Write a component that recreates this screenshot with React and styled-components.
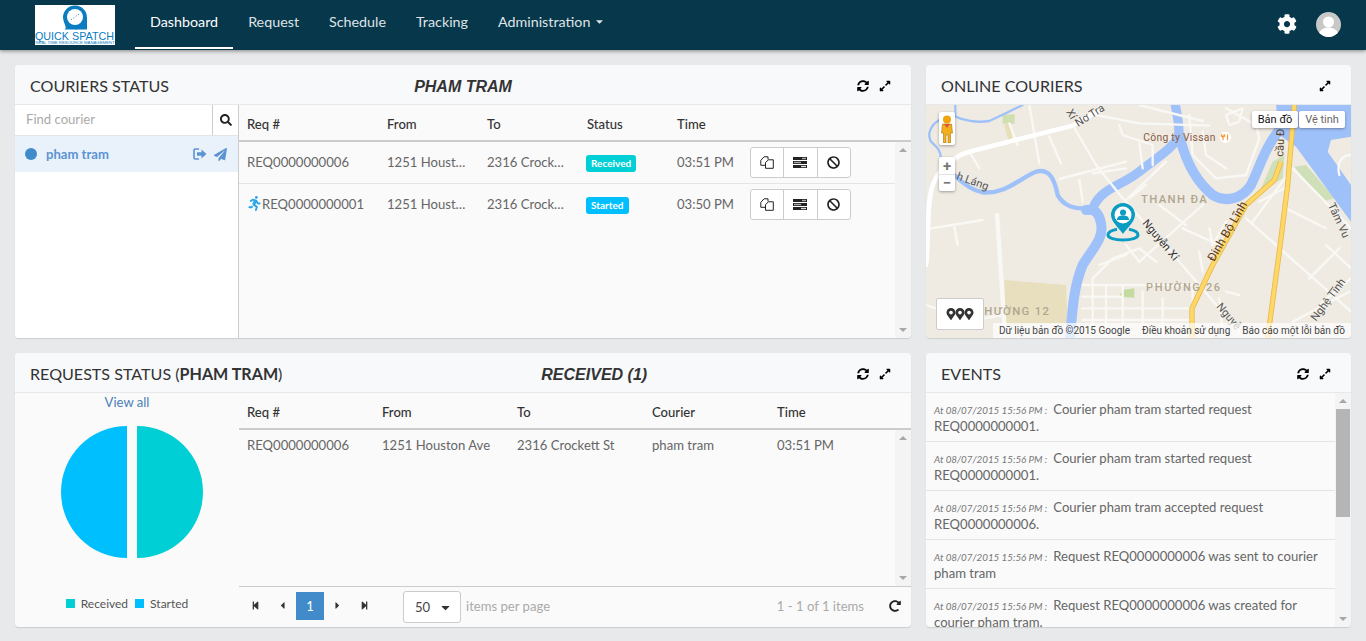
import React from 'react'
import styled, {createGlobalStyle} from 'styled-components'
import {
    FaCog, FaSearch, FaSyncAlt, FaExpandAlt, FaPaperPlane, FaBan, FaRunning,
    FaStepBackward, FaStepForward, FaCaretLeft, FaCaretRight, FaCaretDown, FaRedoAlt, FaMapMarkerAlt
} from 'react-icons/fa'

const GlobalStyle = createGlobalStyle`
    html, body {
        margin: 0;
        padding: 0;
        height: 100%;
        overflow: hidden;
        background: #e8e9eb;
        font-family: "Lato", sans-serif;
        font-size: 13.1px;
        color: #666;
    }
    * { box-sizing: border-box; }
`

const CYAN = '#00cfd5'
const SKY = '#00bfff'

//Navbar
const Navbar = styled.header`
    height: 50px;
    background: #07374b;
    box-shadow: 0 1px 4px rgba(0,0,0,.45);
    display: flex;
    align-items: stretch;
    padding: 0 25px 0 35px;
    position: relative;
    z-index: 2;
`
const LogoBox = styled.div`
    width: 80px;
    height: 40px;
    margin-top: 5px;
    background: #fff;
    overflow: hidden;
    svg { display: block; }
`
const NavList = styled.nav`
    display: flex;
    margin-left: 20px;
    flex: 1;
`
const NavItem = styled.a`
    display: flex;
    align-items: center;
    gap: 4px;
    height: 49px;
    padding: 0 15px 5px;
    font-size: 14.3px;
    color: ${p => (p.$active ? '#fff' : '#dfe3e6')};
    border-bottom: 2px solid ${p => (p.$active ? '#fff' : 'transparent')};
    svg { font-size: 11px; }
`
const NavRight = styled.div`
    display: flex;
    align-items: center;
    gap: 19px;
    color: #fff;
    font-size: 20px;
    padding-bottom: 2px;
`
const Avatar = styled.div`
    width: 25px;
    height: 25px;
    border-radius: 50%;
    overflow: hidden;
    background: #c8c8c8;
    svg { display: block; }
`

//Page
const Page = styled.main`
    display: grid;
    grid-template-columns: 896px 425px;
    grid-template-rows: 273px 274px;
    gap: 15px;
    padding: 15px;
`
const Panel = styled.section`
    background: #fafafa;
    border-radius: 4px;
    box-shadow: 0 1px 1px rgba(0,0,0,.12);
    display: flex;
    flex-direction: column;
    overflow: hidden;
    min-width: 0;
`
const PanelHead = styled.div`
    height: 40px;
    flex: none;
    display: flex;
    align-items: center;
    padding: 2px 20px 0 15px;
    background: #f8f9fb;
    border-bottom: 1px solid #e6e8ea;
`
const PanelTitle = styled.h2`
    margin: 0;
    font-size: 16.1px;
    font-weight: 400;
    color: #333;
    white-space: nowrap;
    b { font-weight: 700; }
`
const PanelCenter = styled.div`
    flex: 1;
    text-align: center;
    font-family: "Liberation Sans", sans-serif;
    font-size: 16px;
    font-weight: 700;
    font-style: italic;
    color: #333;
    padding-top: 3px;
    padding-left: ${p => p.$left || 0}px;
    padding-right: ${p => p.$right || 0}px;
`
const HeadTools = styled.div`
    display: flex;
    gap: 10px;
    margin-left: auto;
    color: #000;
    font-size: 12px;
    svg { display: block; }
`
const PanelBody = styled.div`
    flex: 1;
    min-height: 0;
    display: flex;
`

//Courier sidebar
const Sidebar = styled.aside`
    width: 224px;
    flex: none;
    background: #fff;
    border-right: 1px solid #ccc;
`
const SearchRow = styled.div`
    height: 31px;
    display: flex;
    align-items: center;
    border-bottom: 1px solid #e4e4e4;
`
const SearchInput = styled.div`
    flex: 1;
    padding: 0 0 3px 11px;
    color: #aaa;
`
const SearchButton = styled.div`
    width: 26px;
    height: 30px;
    border-left: 1px solid #ccc;
    display: flex;
    align-items: center;
    justify-content: center;
    color: #222;
    font-size: 12px;
`
const CourierRow = styled.div`
    height: 36px;
    display: flex;
    align-items: center;
    padding: 0 11px 0 10px;
    background: #e9f1fa;
    color: #5b93d3;
    font-weight: 700;
`
const CourierDot = styled.span`
    width: 12px;
    height: 12px;
    border-radius: 50%;
    background: #428bca;
    margin-right: 9px;
`
const CourierName = styled.span`
    flex: 1;
`
const CourierTools = styled.span`
    display: flex;
    align-items: center;
    gap: 7px;
    font-size: 13px;
    svg { display: block; }
`

//Tables
const TableWrap = styled.div`
    flex: 1;
    min-width: 0;
    display: flex;
    flex-direction: column;
`
const HeadRow = styled.div`
    height: 37px;
    flex: none;
    display: grid;
    grid-template-columns: ${p => p.$cols};
    align-items: center;
    border-bottom: 2px solid #ccc;
    padding-top: 2px;
    font-weight: 500;
    color: #333;
`
const HeadCell = styled.div`
    padding-left: 8px;
`
const TableScroll = styled.div`
    flex: 1;
    min-height: 0;
    display: flex;
`
const Rows = styled.div`
    flex: 1;
    min-width: 0;
`
const Row = styled.div`
    display: grid;
    grid-template-columns: ${p => p.$cols};
    align-items: center;
    height: ${p => p.$height}px;
    border-bottom: ${p => (p.$line ? '1px solid #e4e4e4' : 'none')};
`
const Cell = styled.div`
    padding: 0 12px 2px 8px;
    white-space: nowrap;
    overflow: hidden;
    display: flex;
    align-items: center;
`
const Clip = styled.span`
    overflow: hidden;
    text-overflow: ellipsis;
`
const Runner = styled(FaRunning)`
    color: #2aa6e6;
    font-size: 15px;
    flex: none;
`
const Badge = styled.span`
    display: inline-block;
    height: 17px;
    line-height: 17px;
    padding: 0 5px;
    margin: 4px 0 0 -1px;
    border-radius: 3px;
    font-size: 10px;
    font-weight: 700;
    color: #fff;
    background: ${p => p.$color};
`
const BtnGroup = styled.div`
    display: flex;
    width: 101px;
    height: 31px;
    margin-top: 2px;
    background: #fff;
    border: 1px solid #ccc;
    border-radius: 3px;
`
const GroupBtn = styled.div`
    flex: 1;
    display: flex;
    align-items: center;
    justify-content: center;
    color: #222;
    font-size: 13px;
    & + & { border-left: 1px solid #ccc; }
`

//Scrollbar
const ScrollBar = styled.div`
    width: 16px;
    flex: none;
    display: flex;
    flex-direction: column;
    align-items: center;
    background: #f4f4f4;
`
const ScrollArrow = styled.div`
    width: 0;
    height: 0;
    flex: none;
    margin: 6px 0;
    border-left: 4px solid transparent;
    border-right: 4px solid transparent;
    ${p => (p.$down ? 'border-top: 4px solid #a6a6a6;' : 'border-bottom: 4px solid #a6a6a6;')}
`
const ScrollThumb = styled.div`
    width: 14px;
    height: 108px;
    background: #b5b5b5;
`
const ScrollSpace = styled.div`
    flex: 1;
`

//Requests
const ChartCol = styled.div`
    width: 224px;
    flex: none;
    display: flex;
    flex-direction: column;
    align-items: center;
`
const ViewAll = styled.a`
    color: #4a80b8;
    height: 33px;
    line-height: 18px;
`
const PieSvg = styled.svg`
    display: block;
    margin-left: 10px;
`
const Legend = styled.div`
    margin-top: 38px;
    margin-right: 7px;
    display: flex;
    align-items: center;
    font-size: 12px;
    color: #555;
`
const LegendMark = styled.span`
    width: 9px;
    height: 9px;
    background: ${p => p.$color};
    margin: 0 6px 0 7px;
`
const Pager = styled.div`
    height: 41px;
    flex: none;
    display: flex;
    align-items: center;
    border-top: 1px solid #ccc;
    padding: 0 10px 3px 3px;
    color: #aaa;
`
const PagerArrow = styled.span`
    width: 27px;
    display: flex;
    justify-content: center;
    color: #333;
    font-size: ${p => p.$size || 9}px;
`
const PagerCurrent = styled.span`
    width: 28px;
    height: 28px;
    background: #428bca;
    color: #fff;
    display: flex;
    align-items: center;
    justify-content: center;
`
const PageSize = styled.div`
    width: 58px;
    height: 32px;
    margin: 3px 5px 0 25px;
    background: #fff;
    border: 1px solid #ccc;
    border-radius: 3px;
    display: flex;
    align-items: center;
    justify-content: space-between;
    padding: 0 8px 0 11px;
    color: #444;
    svg { font-size: 13px; color: #333; }
`
const PagerInfo = styled.span`
    margin-left: auto;
    margin-right: 25px;
`
const PagerReload = styled.span`
    color: #222;
    font-size: 12px;
    display: flex;
`

//Events
const EventList = styled.div`
    flex: 1;
    min-width: 0;
    overflow: hidden;
`
const EventItem = styled.div`
    height: 49px;
    padding: 8px 8px 0;
    line-height: 16px;
    border-bottom: 1px solid #e4e4e4;
    color: #666;
    overflow: hidden;
`
const EventTime = styled.i`
    font-size: 9.8px;
    color: #777;
    margin-right: 6px;
`

//Map
const MapBox = styled.div`
    position: relative;
    flex: 1;
    overflow: hidden;
    background: #efebe3;
    font-family: "Roboto", sans-serif;
`
const MapArt = styled.svg`
    display: block;
    width: 425px;
    height: 233px;
    text { font-family: "Roboto", sans-serif; }
`
const MapCtl = styled.div`
    position: absolute;
    left: ${p => p.$left}px;
    top: ${p => p.$top}px;
    width: ${p => p.$width}px;
    height: ${p => p.$height}px;
    background: #fff;
    border-radius: 2px;
    box-shadow: 0 1px 3px rgba(0,0,0,.35);
    display: flex;
    align-items: center;
    justify-content: center;
    color: #666;
    font-size: 11px;
    svg { display: block; }
`
const ZoomBtn = styled.div`
    height: 17px;
    display: flex;
    align-items: center;
    justify-content: center;
    font-size: 15px;
    font-weight: 700;
    color: #777;
    & + & { border-top: 1px solid #e2e2e2; }
`
const ZoomStack = styled(MapCtl)`
    display: block;
`
const MapType = styled(MapCtl)`
    color: ${p => (p.$on ? '#111' : '#666')};
`
const PinsButton = styled.div`
    position: absolute;
    left: 10px;
    top: 193px;
    width: 48px;
    height: 32px;
    background: #fff;
    border: 1px solid #ccc;
    border-radius: 2px;
    display: flex;
    align-items: center;
    justify-content: center;
    color: #333;
    font-size: 12px;
    svg { margin: 0 -1.5px; }
`
const Attribution = styled.div`
    position: absolute;
    right: 0;
    bottom: 0;
    height: 15px;
    padding: 0 6px;
    display: flex;
    gap: 12px;
    align-items: center;
    font-size: 10px;
    color: #444;
    background: rgba(255,255,255,.7);
    white-space: nowrap;
`
const CourierPin = styled.svg`
    position: absolute;
    left: 180px;
    top: 97px;
`

const COURIER_COLS = '140px 100px 100px 90px 73px 1fr'
const REQUEST_COLS = '135px 135px 135px 125px 1fr'

const mainRoad = 'M0 480C10 400 0 300 20 240C40 190 90 150 130 140L440 62L520 15'
const roads = [
    'M440 60L510 180L590 280L760 470L940 680',
    'M510 30L640 55L850 62', 'M640 0L830 48', 'M310 0L340 175', 'M370 95L405 175', 'M250 55L275 120',
    'M15 370L170 345', 'M85 365L95 420', 'M130 140L160 190', 'M400 222L600 170', 'M460 225L470 290',
    'M500 205L600 190', 'M580 60L590 90L680 120L680 180', 'M640 115L650 190',
    'M600 285L720 170', 'M610 280L660 240', 'M640 470L830 300', 'M770 370L880 420', 'M850 370L860 420L900 350',
    'M700 300L780 360', 'M500 700V520L560 460L640 430L690 470', 'M520 480L600 450', 'M600 420L640 470',
    'M470 540H800V690', 'M470 575H590', 'M470 610H790', 'M470 645H790', 'M540 540V690', 'M590 540V690', 'M650 560V690', 'M710 580V690',
    'M980 350L1100 190L1275 370', 'M1000 290L1075 250', 'M1080 310L1200 370', 'M960 340L1275 620',
    'M1150 520L1240 430', 'M1180 600L1275 520', 'M1100 650L1270 560', 'M1200 420L1275 490',
    'M790 30L800 150L870 220L960 210L1000 100L990 60L900 10', 'M900 30L950 10L940 50L910 60Z', 'M830 80L840 150L900 190',
    'M1240 210C1230 170 1250 150 1275 150', 'M820 440L830 500', 'M900 560L940 570', 'M880 580L890 690',
    'M0 600L60 620', 'M170 640L235 630',
]

function LogOutIcon() {
    return (
        <svg width="14" height="12" viewBox="0 0 14 12">
            <path d="M6 1H2.2C1.5 1 1 1.5 1 2.2v7.6C1 10.5 1.5 11 2.2 11H6" fill="none" stroke="currentColor" strokeWidth="1.6" />
            <path d="M4 4.2h4.5V1.5L13.5 6l-5 4.5V7.8H4z" fill="currentColor" />
        </svg>
    )
}

function CopyIcon() {
    return (
        <svg width="14" height="13" viewBox="0 0 14 13" fill="none" stroke="#222" strokeWidth="1">
            <path d="M5 9.3H.8V4.3L4.1.8H8v2.700" />
            <path d="M5.500 12.300V6.500L8.500 3.800h4.800v8.500z" />
        </svg>
    )
}

function BarsIcon() {
    return (
        <svg width="14" height="11" viewBox="0 0 14 11">
            <rect width="14" height="3" fill="#222" />
            <rect x="9" y=".8" width="4" height="1.4" fill="#aaa" />
            <rect y="4" width="14" height="3" fill="#222" />
            <rect x="1" y="4.8" width="7" height="1.4" fill="#aaa" />
            <rect y="8" width="14" height="3" fill="#222" />
            <rect x="8" y="8.8" width="5" height="1.4" fill="#ddd" />
        </svg>
    )
}

function LogoMark() {
    return (
        <svg width="80" height="40" viewBox="0 0 80 40">
            <path d="M28 12a12 12 0 1 1 12 12.5H29.500C33 23 28 18 28 12z" fill="#0a7cc0" />
            <path d="M40 24.5h12V12z" fill="#0a7cc0" />
            <circle cx="40" cy="12" r="8" fill="#fff" />
            <path d="M36 15l8-6" stroke="#0a7cc0" strokeWidth="1" strokeDasharray="1 2" />
            <text x="0" y="34.500" fontFamily="Liberation Sans" fontSize="11" fill="#0a7cc0" textLength="79" lengthAdjust="spacingAndGlyphs">QUICK SPATCH</text>
            <text x="0.500" y="39" fontFamily="Liberation Sans" fontSize="3.200" fill="#0a7cc0" textLength="79" lengthAdjust="spacingAndGlyphs">REAL TIME RESOURCE MANAGEMENT</text>
        </svg>
    )
}

function MapDrawing() {
    const label = {fill: '#555', fontSize: 33}
    const area = {fill: '#b0a68f', fontSize: 34, fontWeight: 500}
    return (
        <MapArt viewBox="0 0 1275 699">
            <rect width="1275" height="699" fill="#efebe3" />
            <path d="M235 525L420 540L425 655L240 660Z" fill="#e8dfbf" />
            <rect x="230" y="28" width="36" height="28" fill="#cfdfae" />
            <path d="M235 60L250 55L262 115L250 118Z" fill="#e6dfb8" />
            <path d="M578 575L590 555L625 550V578Z" fill="#c4dba0" />
            <path d="M1040 170L1075 150L1070 220L1000 262Z" fill="#cfe0b8" />
            <path d="M1105 185L1140 180L1225 280L1190 290Z" fill="#cfe0b8" />
            {/* water */}
            <g fill="none" stroke="#9fc1fa" strokeLinecap="round" strokeLinejoin="round">
                <path d="M432 700C440 600 445 540 470 480C500 430 535 400 525 355C518 320 505 312 480 315" strokeWidth="30" />
                <path d="M500 305C450 320 410 300 395 270C385 220 370 190 330 200C280 220 240 268 170 262C130 255 100 225 85 210" strokeWidth="13" />
                <path d="M505 300C530 250 590 240 640 200C690 160 740 130 758 95C762 60 752 25 748 0" strokeWidth="28" />
                <path d="M762 100C780 170 810 230 860 270C900 295 950 280 975 240C1000 190 1015 130 1060 75" strokeWidth="30" />
                <path d="M290 0C260 15 240 25 190 48C150 55 110 45 88 35V0" strokeWidth="7" />
                <path d="M40 45C15 60 2 85 15 110C30 125 42 130 45 160" strokeWidth="7" />
            </g>
            <path d="M1050 0H1275V95L1215 105L1205 140L1275 240V350L1110 125L1060 90Z" fill="#9fc1fa" />
            <g fill="none" stroke="#f9f8f4" strokeLinecap="round" strokeLinejoin="round" strokeWidth="7">
                {roads.map((d) => <path key={d} d={d} />)}
            </g>
            <path d="M213 325L235 660" stroke="#f9f8f4" strokeWidth="13" />
            <path d={mainRoad} fill="none" stroke="#fff" strokeLinecap="round" strokeWidth="14" />
            <g fill="none" strokeLinejoin="round">
                <path d="M798 699V610L860 480L960 300L1045 225L1065 170" stroke="#e9b84e" strokeWidth="16" />
                <path d="M1025 699L1060 440L1085 240L1105 0" stroke="#e9b84e" strokeWidth="16" />
                <path d="M798 699V610L860 480L960 300L1045 225L1065 170" stroke="#fdd867" strokeWidth="11" />
                <path d="M1025 699L1060 440L1085 240L1105 0" stroke="#fdd867" strokeWidth="11" />
            </g>
            <text {...label} transform="translate(420 20) rotate(60)">Xí</text>
            <text {...label} transform="translate(456 66) rotate(-32)">Nơ Tra</text>
            <text x="652" y="107" fill="#8a5a44" fontSize="31" letterSpacing=".8">Công ty Vissan</text>
            <circle cx="898" cy="97" r="17" fill="#fff" />
            <path d="M891 88v18M905 88v18M886 88v7h10v-7" fill="none" stroke="#f08c1a" strokeWidth="3" />
            <text {...label} fill="#5c4326" transform="translate(1072 155) rotate(-88)">cầu Đ</text>
            <text {...label} transform="translate(90 222) rotate(20)">h Láng</text>
            <text {...area} letterSpacing="4" x="645" y="294">THANH ĐA</text>
            <text {...area} letterSpacing="5" fontSize="33" x="660" y="559">PHƯỜNG 26</text>
            <text {...area} letterSpacing="4" x="175" y="630">HƯỜNG 12</text>
            <text {...label} fill="#333" transform="translate(648 355) rotate(50)">Nguyễn Xí</text>
            <text {...label} fill="#5c3a18" fontSize="36" transform="translate(864 472) rotate(-60)">Đinh Bộ Lĩnh</text>
            <text {...label} transform="translate(1205 300) rotate(65)">Tâm Vu</text>
            <text {...label} transform="translate(1170 650) rotate(-53)">Nghệ Tĩnh</text>
            <text {...label} transform="translate(870 605) rotate(50)">Nguyễ</text>
        </MapArt>
    )
}

function Tools({sync}) {
    return (
        <HeadTools>
            {sync && <FaSyncAlt />}
            <FaExpandAlt />
        </HeadTools>
    )
}

function RowButtons() {
    return (
        <BtnGroup>
            <GroupBtn><CopyIcon /></GroupBtn>
            <GroupBtn><BarsIcon /></GroupBtn>
            <GroupBtn><FaBan /></GroupBtn>
        </BtnGroup>
    )
}

const EVENTS = [
    'Courier pham tram started request REQ0000000001.',
    'Courier pham tram started request REQ0000000001.',
    'Courier pham tram accepted request REQ0000000006.',
    'Request REQ0000000006 was sent to courier pham tram',
    'Request REQ0000000006 was created for courier pham tram.',
]

function App() {
    return (
        <>
            <GlobalStyle />
            <Navbar>
                <LogoBox><LogoMark /></LogoBox>
                <NavList>
                    <NavItem $active>Dashboard</NavItem>
                    <NavItem>Request</NavItem>
                    <NavItem>Schedule</NavItem>
                    <NavItem>Tracking</NavItem>
                    <NavItem>Administration <FaCaretDown /></NavItem>
                </NavList>
                <NavRight>
                    <FaCog />
                    <Avatar>
                        <svg width="25" height="25" viewBox="0 0 25 25">
                            <circle cx="12.5" cy="10" r="5.5" fill="#fff" />
                            <ellipse cx="12.5" cy="22" rx="9.5" ry="6.5" fill="#fff" />
                        </svg>
                    </Avatar>
                </NavRight>
            </Navbar>
            <Page>
                <Panel>
                    <PanelHead>
                        <PanelTitle>COURIERS STATUS</PanelTitle>
                        <PanelCenter $right={100}>PHAM TRAM</PanelCenter>
                        <Tools sync />
                    </PanelHead>
                    <PanelBody>
                        <Sidebar>
                            <SearchRow>
                                <SearchInput>Find courier</SearchInput>
                                <SearchButton><FaSearch /></SearchButton>
                            </SearchRow>
                            <CourierRow>
                                <CourierDot />
                                <CourierName>pham tram</CourierName>
                                <CourierTools><LogOutIcon /><FaPaperPlane /></CourierTools>
                            </CourierRow>
                        </Sidebar>
                        <TableWrap>
                            <HeadRow $cols={COURIER_COLS}>
                                <HeadCell>Req #</HeadCell>
                                <HeadCell>From</HeadCell>
                                <HeadCell>To</HeadCell>
                                <HeadCell>Status</HeadCell>
                                <HeadCell>Time</HeadCell>
                            </HeadRow>
                            <TableScroll>
                                <Rows>
                                    <Row $cols={COURIER_COLS} $height={42} $line>
                                        <Cell>REQ0000000006</Cell>
                                        <Cell><Clip>1251 Houston Ave</Clip></Cell>
                                        <Cell><Clip>2316 Crockett St</Clip></Cell>
                                        <Cell><Badge $color={CYAN}>Received</Badge></Cell>
                                        <Cell>03:51 PM</Cell>
                                        <Cell><RowButtons /></Cell>
                                    </Row>
                                    <Row $cols={COURIER_COLS} $height={41}>
                                        <Cell><Runner />REQ0000000001</Cell>
                                        <Cell><Clip>1251 Houston Ave</Clip></Cell>
                                        <Cell><Clip>2316 Crockett St</Clip></Cell>
                                        <Cell><Badge $color={SKY}>Started</Badge></Cell>
                                        <Cell>03:50 PM</Cell>
                                        <Cell><RowButtons /></Cell>
                                    </Row>
                                </Rows>
                                <ScrollBar>
                                    <ScrollArrow />
                                    <ScrollSpace />
                                    <ScrollArrow $down />
                                </ScrollBar>
                            </TableScroll>
                        </TableWrap>
                    </PanelBody>
                </Panel>

                <Panel>
                    <PanelHead>
                        <PanelTitle>ONLINE COURIERS</PanelTitle>
                        <Tools />
                    </PanelHead>
                    <MapBox>
                        <MapDrawing />
                        <MapCtl $left={13} $top={7} $width={16} $height={33}>
                            <svg width="12" height="28" viewBox="0 0 12 28">
                                <circle cx="6" cy="4.5" r="4" fill="#f0a30a" />
                                <path d="M1.5 9h9l1 9h-2v10H7v-8H5v8H2.5V18h-2z" fill="#f2b01e" stroke="#a8750c" strokeWidth=".6" />
                                <path d="M3 9h6l-3 4z" fill="#e0533a" />
                            </svg>
                        </MapCtl>
                        <ZoomStack $left={13} $top={52} $width={16} $height={34}>
                            <ZoomBtn>+</ZoomBtn>
                            <ZoomBtn>−</ZoomBtn>
                        </ZoomStack>
                        <MapType $on $left={326} $top={6} $width={46} $height={17}>Bản đồ</MapType>
                        <MapType $left={373} $top={6} $width={46} $height={17}>Vệ tinh</MapType>
                        <CourierPin width="34" height="40" viewBox="0 0 34 40">
                            <path d="M17 1a12 12 0 0 1 12 12C29 20 20 27 17 32C14 27 5 20 5 13A12 12 0 0 1 17 1z" fill="#0a9cc2" />
                            <circle cx="17" cy="13" r="8.5" fill="#fff" />
                            <circle cx="17" cy="10.5" r="3" fill="#0a9cc2" />
                            <path d="M11 18c0-3.5 2.5-4.5 6-4.5s6 1 6 4.5z" fill="#0a9cc2" />
                            <path d="M11 27.3C5 28.5 2 30.5 2 33c0 3 6.5 5 15 5s15-2 15-5c0-2.5-3-4.5-9-5.7" fill="none" stroke="#0a9cc2" strokeWidth="3" />
                        </CourierPin>
                        <PinsButton><FaMapMarkerAlt /><FaMapMarkerAlt /><FaMapMarkerAlt /></PinsButton>
                        <Attribution>
                            <span>Dữ liệu bản đồ ©2015 Google</span>
                            <span>Điều khoản sử dụng</span>
                            <span>Báo cáo một lỗi bản đồ</span>
                        </Attribution>
                    </MapBox>
                </Panel>

                <Panel>
                    <PanelHead>
                        <PanelTitle>REQUESTS STATUS (<b>PHAM TRAM</b>)</PanelTitle>
                        <PanelCenter $left={49}>RECEIVED (1)</PanelCenter>
                        <Tools sync />
                    </PanelHead>
                    <PanelBody>
                        <ChartCol>
                            <ViewAll>View all</ViewAll>
                            <PieSvg width="142" height="132" viewBox="0 0 142 132">
                                <path d="M66 0A66 66 0 0 0 66 132Z" fill={SKY} />
                                <path d="M76 0A66 66 0 0 1 76 132Z" fill={CYAN} />
                            </PieSvg>
                            <Legend>
                                <LegendMark $color={CYAN} />Received
                                <LegendMark $color={SKY} />Started
                            </Legend>
                        </ChartCol>
                        <TableWrap>
                            <HeadRow $cols={REQUEST_COLS}>
                                <HeadCell>Req #</HeadCell>
                                <HeadCell>From</HeadCell>
                                <HeadCell>To</HeadCell>
                                <HeadCell>Courier</HeadCell>
                                <HeadCell>Time</HeadCell>
                            </HeadRow>
                            <TableScroll>
                                <Rows>
                                    <Row $cols={REQUEST_COLS} $height={31}>
                                        <Cell>REQ0000000006</Cell>
                                        <Cell>1251 Houston Ave</Cell>
                                        <Cell>2316 Crockett St</Cell>
                                        <Cell>pham tram</Cell>
                                        <Cell>03:51 PM</Cell>
                                    </Row>
                                </Rows>
                                <ScrollBar>
                                    <ScrollArrow />
                                    <ScrollSpace />
                                    <ScrollArrow $down />
                                </ScrollBar>
                            </TableScroll>
                            <Pager>
                                <PagerArrow><FaStepBackward /></PagerArrow>
                                <PagerArrow $size={11}><FaCaretLeft /></PagerArrow>
                                <PagerCurrent>1</PagerCurrent>
                                <PagerArrow $size={11}><FaCaretRight /></PagerArrow>
                                <PagerArrow><FaStepForward /></PagerArrow>
                                <PageSize>50 <FaCaretDown /></PageSize>
                                items per page
                                <PagerInfo>1 - 1 of 1 items</PagerInfo>
                                <PagerReload><FaRedoAlt /></PagerReload>
                            </Pager>
                        </TableWrap>
                    </PanelBody>
                </Panel>

                <Panel>
                    <PanelHead>
                        <PanelTitle>EVENTS</PanelTitle>
                        <Tools sync />
                    </PanelHead>
                    <PanelBody>
                        <EventList>
                            {EVENTS.map((text, i) => (
                                <EventItem key={i}>
                                    <EventTime>At 08/07/2015 15:56 PM :</EventTime>
                                    {text}
                                </EventItem>
                            ))}
                        </EventList>
                        <ScrollBar>
                            <ScrollArrow />
                            <ScrollThumb />
                            <ScrollSpace />
                            <ScrollArrow $down />
                        </ScrollBar>
                    </PanelBody>
                </Panel>
            </Page>
        </>
    )
}

export default App
